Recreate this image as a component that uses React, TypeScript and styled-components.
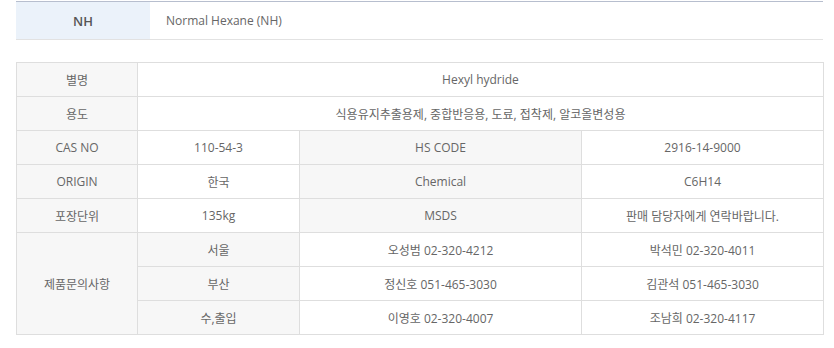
import React from "react";
import styled, { createGlobalStyle } from "styled-components";

const Global = createGlobalStyle`
  html, body { margin: 0; padding: 0; background: #fff; }
  body {
    font-family: "Open Sans", "Noto Sans CJK KR", sans-serif;
    color: #666;
    font-size: 12px;
  }
`;

const Page = styled.div`
  padding: 1px 11px 0 16px;
  width: 807px;
`;

const TitleBar = styled.div`
  display: flex;
  border-top: 1px solid #b7bece;
  border-bottom: 1px solid #e2e2e2;
  height: 37px;
`;

const TitleKey = styled.div`
  width: 134px;
  background: #ebf2fa;
  display: flex;
  align-items: center;
  justify-content: center;
  font-size: 13px;
  font-weight: 600;
  color: #555;
`;

const TitleValue = styled.div`
  display: flex;
  align-items: center;
  padding-left: 16px;
  color: #666;
`;

const Table = styled.table`
  margin-top: 22px;
  width: 807px;
  border-collapse: collapse;
  table-layout: fixed;
`;

const Cell = styled.td<{ $head?: boolean }>`
  border: 1px solid #dedede;
  height: 33px;
  padding: 0;
  text-align: center;
  vertical-align: middle;
  background: ${(p) => (p.$head ? "#f7f7f7" : "#fff")};
  color: #666;
  font-size: 12px;
  white-space: nowrap;
`;

const contacts = [
  ["서울", "오성범 02-320-4212", "박석민 02-320-4011"],
  ["부산", "정신호 051-465-3030", "김관석 051-465-3030"],
  ["수,출입", "이영호 02-320-4007", "조남희 02-320-4117"],
];

export default function App() {
  return (
    <>
      <Global />
      <Page>
        <TitleBar>
          <TitleKey>NH</TitleKey>
          <TitleValue>Normal Hexane (NH)</TitleValue>
        </TitleBar>
        <Table>
          <colgroup>
            <col style={{ width: 121 }} />
            <col style={{ width: 162 }} />
            <col style={{ width: 282 }} />
            <col style={{ width: 242 }} />
          </colgroup>
          <tbody>
            <tr>
              <Cell $head>별명</Cell>
              <Cell colSpan={3}>Hexyl hydride</Cell>
            </tr>
            <tr>
              <Cell $head>용도</Cell>
              <Cell colSpan={3}>식용유지추출용제, 중합반응용, 도료, 접착제, 알코올변성용</Cell>
            </tr>
            <tr>
              <Cell $head>CAS NO</Cell>
              <Cell>110-54-3</Cell>
              <Cell $head>HS CODE</Cell>
              <Cell>2916-14-9000</Cell>
            </tr>
            <tr>
              <Cell $head>ORIGIN</Cell>
              <Cell>한국</Cell>
              <Cell $head>Chemical</Cell>
              <Cell>C6H14</Cell>
            </tr>
            <tr>
              <Cell $head>포장단위</Cell>
              <Cell>135kg</Cell>
              <Cell $head>MSDS</Cell>
              <Cell>판매 담당자에게 연락바랍니다.</Cell>
            </tr>
            {contacts.map((c, i) => (
              <tr key={c[0]}>
                {i === 0 && (
                  <Cell $head rowSpan={3}>
                    제품문의사항
                  </Cell>
                )}
                <Cell $head>{c[0]}</Cell>
                <Cell>{c[1]}</Cell>
                <Cell>{c[2]}</Cell>
              </tr>
            ))}
          </tbody>
        </Table>
      </Page>
    </>
  );
}
